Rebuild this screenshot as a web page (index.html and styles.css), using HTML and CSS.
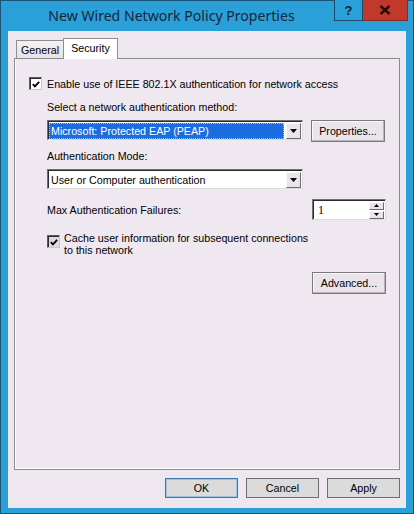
FILE: index.html
```html
<!DOCTYPE html>
<html>
<head>
<meta charset="utf-8">
<link rel="stylesheet" href="styles.css">
</head>
<body>
<div class="window">
  <div class="titlebar">
    <div class="title">New Wired Network Policy Properties</div>
    <div class="cap help">?</div>
    <div class="cap close">
      <svg width="12" height="10" viewBox="0 0 12 10"><path d="M1.5 1 L10.5 9 M10.5 1 L1.5 9" stroke="#2a0b08" stroke-width="2.4" fill="none"/></svg>
    </div>
  </div>
  <div class="client">
    <div class="tabs">
      <div class="tab">General</div>
      <div class="tab active">Security</div>
    </div>
    <div class="panel">
      <div class="check-row">
        <span class="cb"><svg width="11" height="11" viewBox="0 0 11 11"><path d="M2 5.2 L4.3 7.6 L9 2.6" stroke="#000" stroke-width="2" fill="none"/></svg></span>
        <span>Enable use of IEEE 802.1X authentication for network access</span>
      </div>
      <div class="indent">
        <div class="label first">Select a network authentication method:</div>
        <div class="row">
          <div class="combo">
            <div class="value selected">Microsoft: Protected EAP (PEAP)</div>
            <div class="arrow"><svg width="7" height="4" viewBox="0 0 7 4"><path d="M0 0 H7 L3.5 4 Z" fill="#000"/></svg></div>
          </div>
          <div class="btn">Properties...</div>
        </div>
        <div class="label">Authentication Mode:</div>
        <div class="row">
          <div class="combo">
            <div class="value">User or Computer authentication</div>
            <div class="arrow"><svg width="7" height="4" viewBox="0 0 7 4"><path d="M0 0 H7 L3.5 4 Z" fill="#000"/></svg></div>
          </div>
        </div>
        <div class="max-row">
          <span>Max Authentication Failures:</span>
          <div class="spin">
            <span class="spin-value">1</span>
            <div class="spin-btns">
              <div class="spin-btn"><svg width="5" height="3" viewBox="0 0 5 3"><path d="M0 3 H5 L2.5 0 Z" fill="#000"/></svg></div>
              <div class="spin-btn"><svg width="5" height="3" viewBox="0 0 5 3"><path d="M0 0 H5 L2.5 3 Z" fill="#000"/></svg></div>
            </div>
          </div>
        </div>
        <div class="cache-row">
          <span class="cb grey"><svg width="11" height="11" viewBox="0 0 11 11"><path d="M2 5.2 L4.3 7.6 L9 2.6" stroke="#000" stroke-width="2" fill="none"/></svg></span>
          <span class="cache-text">Cache user information for subsequent connections<br>to this network</span>
        </div>
        <div class="adv-row">
          <div class="btn">Advanced...</div>
        </div>
      </div>
    </div>
    <div class="footer">
      <div class="fbtn default">OK</div>
      <div class="fbtn">Cancel</div>
      <div class="fbtn">Apply</div>
    </div>
  </div>
</div>
</body>
</html>
```

FILE: styles.css
```css
* { box-sizing: border-box; }

body {
  margin: 0;
  font-family: "Liberation Sans", Arial, sans-serif;
  font-size: 10.7px;
  color: #000;
}

.window {
  width: 414px;
  height: 514px;
  background: #2a9fd8;
  border: 1px solid #1b5576;
  display: flex;
  flex-direction: column;
}

.titlebar {
  height: 30px;
  flex-shrink: 0;
  display: flex;
  align-items: flex-start;
}

.title {
  flex: 1;
  text-align: center;
  padding-left: 8px;
  line-height: 29px;
  font-family: "Noto Sans", sans-serif;
  font-size: 14.1px;
  color: #15283a;
}

.cap {
  height: 21px;
  margin-top: -1px;
  display: flex;
  align-items: center;
  justify-content: center;
}

.help {
  width: 29px;
  border: 1px solid #1d4c69;
  border-top: 0;
  background: #2a9fd8;
  color: #0c2235;
  font: bold 13px "Liberation Sans", Arial, sans-serif;
}

.close {
  width: 45px;
  margin-right: 5px;
  background: #c0392b;
  border-bottom: 1px solid #8c2a20;
  border-right: 1px solid #8c2a20;
}

.client {
  flex: 1;
  margin: 0 7px 5px 7px;
  background: #efe7ef;
  padding: 7px 6px 10px 6px;
  display: flex;
  flex-direction: column;
}

.tabs {
  display: flex;
  align-items: flex-end;
  padding-left: 2px;
}

.tab {
  height: 18px;
  border: 1px solid #8e8e8e;
  border-bottom: 0;
  display: flex;
  align-items: center;
  justify-content: center;
}

.tab:first-child {
  width: 47px;
  border-right: 0;
  background: linear-gradient(#f4f0f4, #e6e2e6);
}

.tab.active {
  width: 55px;
  height: 21px;
  background: #fff;
  margin-bottom: -1px;
  padding-bottom: 2px;
  position: relative;
  z-index: 1;
}

.panel {
  flex: 1;
  border: 1px solid #8c8c8c;
  background: #f0e8f0;
  box-shadow: inset 1px -1px 0 #fff;
  padding: 18px 13px 0 14px;
}

.check-row {
  display: flex;
  align-items: center;
  gap: 5px;
  height: 13px;
}

.cb {
  width: 13px;
  height: 13px;
  border: 1px solid;
  border-color: #5a5a5a #c8c8c8 #c8c8c8 #5a5a5a;
  box-shadow: inset 1px 1px 0 #2e2e2e;
  background: #fff;
  display: flex;
  align-items: center;
  justify-content: center;
  padding: 1px 0 0 1px;
  flex-shrink: 0;
}

.cb.grey { background: #dedade; }

.indent { padding-left: 18px; }

.label {
  line-height: 13px;
  margin-top: 8px;
}

.label.first { margin-top: 11px; }

.row {
  display: flex;
  align-items: flex-start;
  gap: 8px;
  margin-top: 6px;
}

.combo {
  width: 256px;
  height: 20px;
  border: 1px solid;
  border-color: #6f6f6f #dcdcdc #dcdcdc #6f6f6f;
  box-shadow: inset 1px 1px 0 #2b2b2b;
  background: #fff;
  display: flex;
  align-items: center;
  gap: 2px;
  padding: 1px 1px 0 1px;
}

.value {
  flex: 1;
  height: 16px;
  line-height: 16px;
  padding-left: 2px;
  white-space: nowrap;
}

.value.selected {
  background: #1b6ce0;
  color: #fff;
  outline: 1px dotted #c9c08a;
  outline-offset: -1px;
}

.arrow {
  width: 15px;
  height: 16px;
  background: #e9e4e9;
  border: 1px solid;
  border-color: #fbfbfb #6b6b6b #6b6b6b #fbfbfb;
  display: flex;
  align-items: center;
  justify-content: center;
}

.btn {
  width: 74px;
  height: 22px;
  border: 1px solid #7a7a7a;
  background: #ebe5eb;
  box-shadow: inset -1px -1px 0 #b9b4b9, inset 1px 1px 0 #fbf8fb;
  display: flex;
  align-items: center;
  justify-content: center;
}

.max-row {
  display: flex;
  align-items: center;
  justify-content: space-between;
  margin-top: 10px;
}

.spin {
  width: 74px;
  height: 21px;
  border: 1px solid;
  border-color: #6f6f6f #dcdcdc #dcdcdc #6f6f6f;
  box-shadow: inset 1px 1px 0 #2b2b2b;
  background: #fff;
  display: flex;
  align-items: center;
  padding: 1px 1px 0 5px;
}

.spin-value {
  flex: 1;
  font-family: "Liberation Serif", serif;
  font-size: 12px;
}

.spin-btns {
  display: flex;
  flex-direction: column;
  gap: 1px;
}

.spin-btn {
  width: 15px;
  height: 8px;
  background: #e9e4e9;
  border: 1px solid;
  border-color: #fbfbfb #6b6b6b #6b6b6b #fbfbfb;
  display: flex;
  align-items: center;
  justify-content: center;
}

.cache-row {
  display: flex;
  align-items: flex-start;
  gap: 4px;
  margin-top: 12px;
}

.cache-row .cb { margin-top: 3px; }

.cache-text { line-height: 12px; }

.adv-row {
  display: flex;
  justify-content: flex-end;
  margin-top: 16px;
}

.footer {
  display: flex;
  justify-content: flex-end;
  gap: 8px;
  margin-top: 8px;
}

.fbtn {
  width: 73px;
  height: 20px;
  border: 1px solid #6e6e6e;
  background: #dbdbdb;
  display: flex;
  align-items: center;
  justify-content: center;
}

.fbtn.default {
  border-color: #3b78ad;
  box-shadow: inset 0 0 0 1px #9ec3e3;
}
```
